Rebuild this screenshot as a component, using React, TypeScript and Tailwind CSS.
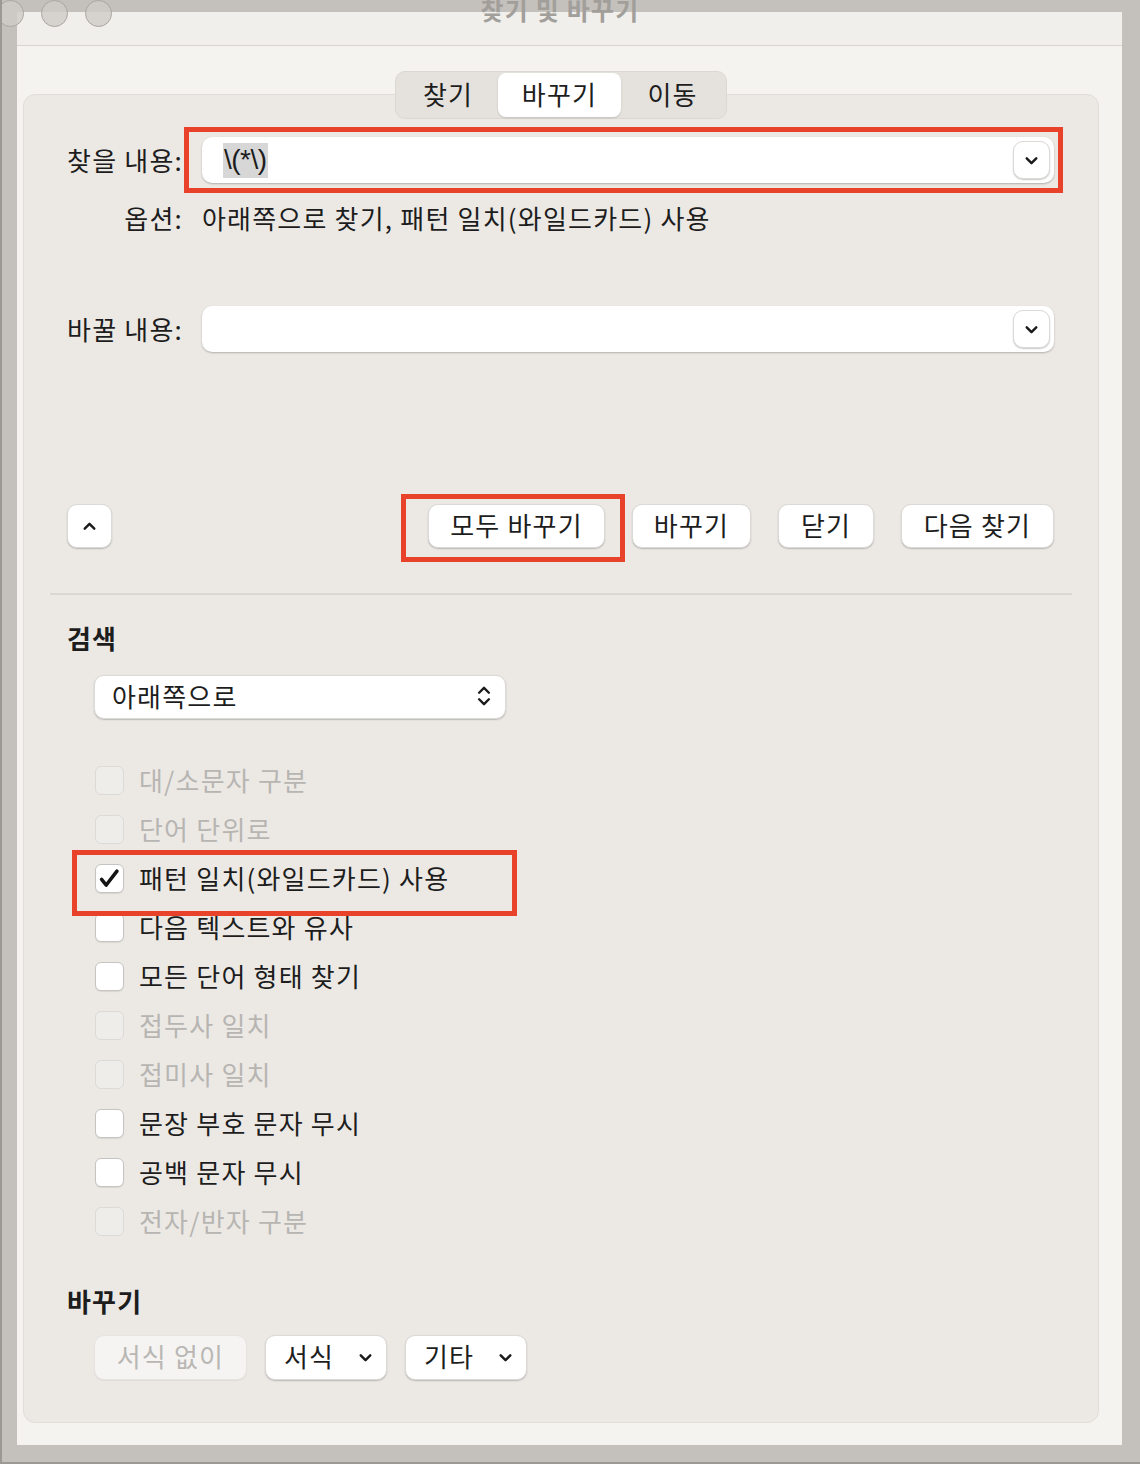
import clsx from "clsx";

const font = "font-['Noto_Sans_CJK_KR','Noto_Sans',sans-serif]";
const btn =
  "flex items-center rounded-[10px] border border-[#dcdad7] bg-white shadow-[0_1px_1.5px_rgba(0,0,0,0.22)]";

const ChevronDown = ({ className = "" }: { className?: string }) => (
  <svg viewBox="0 0 16 16" className={className} fill="none">
    <path d="M3.5 6L8 10.5L12.5 6" stroke="#1b1b1b" strokeWidth="2.3" strokeLinecap="round" strokeLinejoin="round" />
  </svg>
);

const ChevronUp = ({ className = "" }: { className?: string }) => (
  <svg viewBox="0 0 16 16" className={className} fill="none">
    <path d="M3.5 10L8 5.5L12.5 10" stroke="#1b1b1b" strokeWidth="2.3" strokeLinecap="round" strokeLinejoin="round" />
  </svg>
);

type CheckState = "on" | "off" | "disabled";

const CheckRow = ({ label, state }: { label: string; state: CheckState }) => (
  <div className="flex h-[49px] items-center gap-[15px]">
    <span
      className={clsx(
        "flex h-[29px] w-[29px] items-center justify-center rounded-[6px] border",
        state === "disabled"
          ? "border-[#dcdad7] bg-[#efedea]"
          : "border-[#c6c4c1] bg-white shadow-[0_1px_1px_rgba(0,0,0,0.08)]"
      )}
    >
      {state === "on" && (
        <svg viewBox="0 0 29 29" className="h-[29px] w-[29px]" fill="none">
          <path d="M6 15.5L11 21.5L22.5 6.5" stroke="#141414" strokeWidth="3.8" strokeLinecap="round" strokeLinejoin="round" />
        </svg>
      )}
    </span>
    <span className={clsx("pb-[2px]", state === "disabled" ? "text-[#b7b5b2]" : "text-[#1d1d1d]")}>{label}</span>
  </div>
);

const checks: { label: string; state: CheckState }[] = [
  { label: "대/소문자 구분", state: "disabled" },
  { label: "단어 단위로", state: "disabled" },
  { label: "패턴 일치(와일드카드) 사용", state: "on" },
  { label: "다음 텍스트와 유사", state: "off" },
  { label: "모든 단어 형태 찾기", state: "off" },
  { label: "접두사 일치", state: "disabled" },
  { label: "접미사 일치", state: "disabled" },
  { label: "문장 부호 문자 무시", state: "off" },
  { label: "공백 문자 무시", state: "off" },
  { label: "전자/반자 구분", state: "disabled" },
];

export default function App() {
  return (
    <div
      className={clsx(
        "relative h-[1464px] w-[1140px] overflow-hidden border-b-2 border-l-2 border-[#9c9995] bg-[#c4c1bd] pb-[17px] pl-[15px] pr-[18px] pt-[12px] text-[26px] leading-none tracking-[1.2px] text-[#1d1d1d]",
        font
      )}
    >
      {/* window */}
      <div className="flex h-full flex-col bg-[#f5f3ef]">
        <div className="h-[34px] border-b border-[#d8d5d1] bg-[#f1efeb]" />

        <div className="flex flex-1 flex-col pb-[22px] pl-[6px] pr-[23px]">
          {/* tabs */}
          <div className="relative z-10 mt-[25px] flex justify-center">
            <div className="flex h-[48px] items-center rounded-[10px] border border-[#dbd8d4] bg-[#e5e2de] px-[2px]">
              <div className="flex w-[100px] justify-center pb-[3px]">찾기</div>
              <div className="flex h-[44px] w-[123px] items-center justify-center rounded-[8px] bg-white pb-[3px] shadow-[0_1px_2px_rgba(0,0,0,0.15)]">
                바꾸기
              </div>
              <div className="flex w-[103px] justify-center pb-[3px]">이동</div>
            </div>
          </div>

          {/* panel */}
          <div className="-mt-[25px] flex flex-1 flex-col rounded-[12px] border border-[#e1ded9] bg-[#ece9e5]">
            <div className="mt-[42px] flex h-[46px] items-center pr-[44px]">
              <div className="w-[159px] text-right">찾을 내용:</div>
              <div className="ml-[19px] flex h-[46px] flex-1 items-center justify-between rounded-[10px] bg-white pl-[21px] pr-[4px] shadow-[0_1px_2px_rgba(0,0,0,0.25)]">
                <span className="flex h-[35px] items-center bg-[#d7d7d7] px-[1px] font-['Liberation_Sans',sans-serif] text-[28px] tracking-[-0.5px]">
                  \(*\)
                </span>
                <span className={clsx(btn, "h-[38px] w-[37px] justify-center rounded-[8px]")}>
                  <ChevronDown className="h-[17px] w-[17px]" />
                </span>
              </div>
            </div>

            <div className="mt-[17px] flex h-[36px] items-center pr-[44px]">
              <div className="w-[159px] text-right">옵션:</div>
              <div className="ml-[19px]">아래쪽으로 찾기, 패턴 일치(와일드카드) 사용</div>
            </div>

            <div className="mt-[70px] flex h-[46px] items-center pr-[44px]">
              <div className="w-[159px] text-right">바꿀 내용:</div>
              <div className="ml-[19px] flex h-[46px] flex-1 items-center justify-end rounded-[10px] bg-white pr-[4px] shadow-[0_1px_2px_rgba(0,0,0,0.25)]">
                <span className={clsx(btn, "h-[38px] w-[37px] justify-center rounded-[8px]")}>
                  <ChevronDown className="h-[17px] w-[17px]" />
                </span>
              </div>
            </div>

            {/* action buttons */}
            <div className="mt-[152px] flex h-[44px] items-center pl-[43px] pr-[44px]">
              <span className={clsx(btn, "h-[44px] w-[45px] justify-center")}>
                <ChevronUp className="h-[17px] w-[17px]" />
              </span>
              <div className="ml-auto flex gap-[27px]">
                <span className={clsx(btn, "h-[44px] w-[177px] justify-center pb-[3px]")}>모두 바꾸기</span>
                <span className={clsx(btn, "h-[44px] w-[119px] justify-center pb-[3px]")}>바꾸기</span>
                <span className={clsx(btn, "h-[44px] w-[96px] justify-center pb-[3px]")}>닫기</span>
                <span className={clsx(btn, "h-[44px] w-[153px] justify-center pb-[3px]")}>다음 찾기</span>
              </div>
            </div>

            <div className="mx-[26px] mt-[45px] h-[2px] bg-[#dbd8d4]" />

            {/* search */}
            <div className="mt-[25px] flex h-[36px] items-center pl-[43px] font-bold">검색</div>
            <div className="mt-[19px] pl-[70px]">
              <div className={clsx(btn, "h-[44px] w-[412px] justify-between pb-[2px] pl-[17px] pr-[12px]")}>
                <span>아래쪽으로</span>
                <svg viewBox="0 0 16 24" className="h-[26px] w-[18px]" fill="none">
                  <path d="M3.5 9L8 4.5L12.5 9" stroke="#1b1b1b" strokeWidth="2.2" strokeLinecap="round" strokeLinejoin="round" />
                  <path d="M3.5 15L8 19.5L12.5 15" stroke="#1b1b1b" strokeWidth="2.2" strokeLinecap="round" strokeLinejoin="round" />
                </svg>
              </div>
            </div>

            <div className="mt-[37px] flex flex-col pl-[71px]">
              {checks.map((c) => (
                <CheckRow key={c.label} label={c.label} state={c.state} />
              ))}
            </div>

            {/* replace */}
            <div className="mt-[37px] flex h-[36px] items-center pl-[43px] font-bold">바꾸기</div>
            <div className="mt-[16px] flex gap-[18px] pl-[70px]">
              <span className="flex h-[45px] w-[153px] items-center justify-center rounded-[10px] border border-[#e6e4e1] bg-[#f5f4f2] pb-[3px] text-[#b9b7b4] shadow-[0_1px_1px_rgba(0,0,0,0.06)]">
                서식 없이
              </span>
              <span className={clsx(btn, "h-[45px] w-[122px] justify-between pl-[18px] pr-[12px]")}>
                <span className="pb-[3px]">서식</span>
                <ChevronDown className="h-[17px] w-[17px]" />
              </span>
              <span className={clsx(btn, "h-[45px] w-[122px] justify-between pl-[18px] pr-[12px]")}>
                <span className="pb-[3px]">기타</span>
                <ChevronDown className="h-[17px] w-[17px]" />
              </span>
            </div>
          </div>
        </div>
      </div>

      {/* title bar overlay */}
      <div className="absolute left-[-5px] top-0 flex gap-[17px]">
        {[0, 1, 2].map((i) => (
          <span key={i} className="h-[27px] w-[27px] rounded-full border border-[#a9a6a2] bg-[#cfccc8]/80" />
        ))}
      </div>
      <div className="absolute left-0 right-[22px] top-[-3px] text-center text-[25px] font-bold text-[#a29f9b]">
        찾기 및 바꾸기
      </div>

      {/* red annotations */}
      <div className="absolute left-[182px] top-[127px] h-[66px] w-[879px] border-[5px] border-[#e8432a]" />
      <div className="absolute left-[399px] top-[494px] h-[68px] w-[224px] border-[5px] border-[#e8432a]" />
      <div className="absolute left-[70px] top-[850px] h-[66px] w-[445px] border-[5px] border-[#e8432a]" />
    </div>
  );
}
